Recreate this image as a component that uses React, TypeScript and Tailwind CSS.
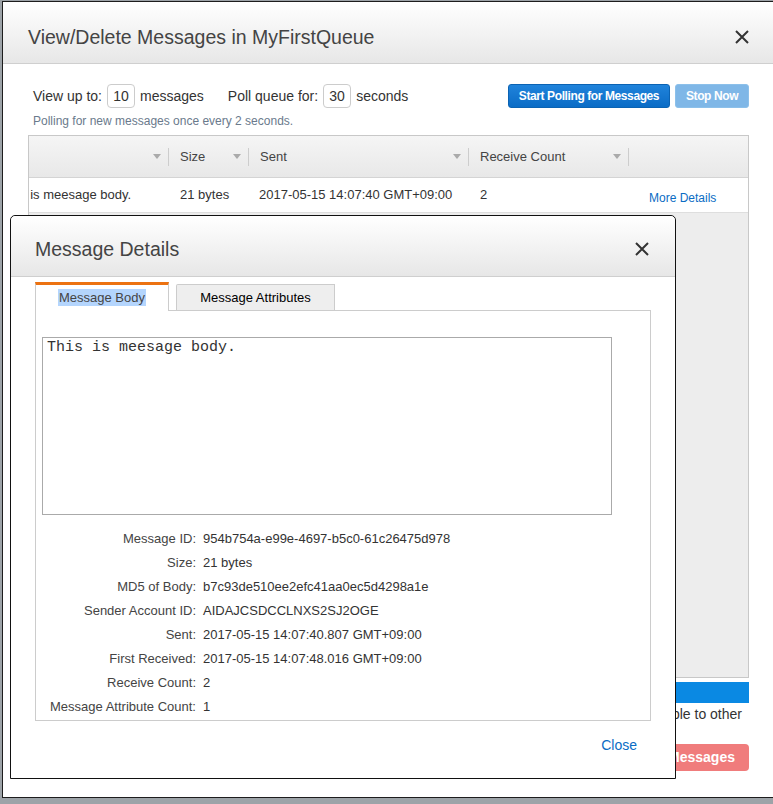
import React from 'react'

const COLS = [
  { label: '', width: 'w-[181px]' },
  { label: 'Size', width: 'w-[80px]' },
  { label: 'Sent', width: 'w-[220px]' },
  { label: 'Receive Count', width: 'w-[160px]' },
]

const DETAILS = [
  ['Message ID:', '954b754a-e99e-4697-b5c0-61c26475d978'],
  ['Size:', '21 bytes'],
  ['MD5 of Body:', 'b7c93de510ee2efc41aa0ec5d4298a1e'],
  ['Sender Account ID:', 'AIDAJCSDCCLNXS2SJ2OGE'],
  ['Sent:', '2017-05-15 14:07:40.807 GMT+09:00'],
  ['First Received:', '2017-05-15 14:07:48.016 GMT+09:00'],
  ['Receive Count:', '2'],
  ['Message Attribute Count:', '1'],
]

function XIcon() {
  return (
    <svg viewBox="0 0 14 14" className="h-[14px] w-[14px]" fill="none" stroke="#333" strokeWidth="2">
      <path d="M1 1l12 12M13 1L1 13" />
    </svg>
  )
}

function SortArrow() {
  return (
    <svg viewBox="0 0 8 5" className="h-[5px] w-[8px]">
      <path d="M0 0h8L4 5z" fill="#aaa" />
    </svg>
  )
}

export default function App() {
  return (
    <div className="relative h-[804px] w-[773px] overflow-hidden bg-[#9da3a8] font-['Liberation_Sans',Arial,sans-serif] text-[#333]">
      {/* Outer modal */}
      <div className="absolute left-[2px] top-[1px] flex h-[797px] w-[773px] flex-col border border-[#1d1d1d] bg-white">
        <div className="flex h-[62px] items-start justify-between border-b border-[#cfcfcf] bg-gradient-to-b from-white to-[#e7e7e7] pl-[25px] pr-[25px] pt-[23px]">
          <h1 className="text-[19.5px] leading-[24px] text-[#444]">View/Delete Messages in MyFirstQueue</h1>
          <div className="pt-[5px]">
            <XIcon />
          </div>
        </div>

        <div className="flex flex-col px-[25px] pt-[20px]">
          <div className="flex h-[24px] items-center justify-between">
            <div className="flex items-center pl-[5px] text-[14px]">
              <span>View up to:</span>
              <span className="mx-[5px] flex h-[24px] w-[28px] items-center justify-center rounded-[4px] border border-[#ccc]">10</span>
              <span>messages</span>
              <span className="ml-[24px]">Poll queue for:</span>
              <span className="mx-[5px] flex h-[24px] w-[28px] items-center justify-center rounded-[4px] border border-[#ccc]">30</span>
              <span>seconds</span>
            </div>
            <div className="flex gap-[5px]">
              <button className="h-[24px] w-[162px] rounded-[3px] border border-[#0b63b3] bg-gradient-to-b from-[#1f83db] to-[#0a6cc6] text-[12px] font-bold tracking-[-0.4px] text-white">
                Start Polling for Messages
              </button>
              <button className="h-[24px] w-[74px] rounded-[3px] border border-[#8cc0ea] bg-[#7fb7e7] text-[12px] font-bold tracking-[-0.4px] text-white">
                Stop Now
              </button>
            </div>
          </div>

          <p className="mt-[5px] pl-[5px] text-[12px] leading-[16px] text-[#6a7a8c]">
            Polling for new messages once every 2 seconds.
          </p>

          {/* Messages table, scrolled sideways */}
          <div className="mt-[6px] flex h-[543px] w-[721px] flex-col overflow-hidden border border-[#c8c8c8]">
            <div className="flex h-[42px] shrink-0 items-center border-b border-[#d4d4d4] bg-gradient-to-b from-[#f5f5f5] to-[#e8e8e8] text-[13px] text-[#444]">
              {COLS.map((c, i) => (
                <div
                  key={i}
                  className={`${c.width} flex shrink-0 items-center pl-[11px] ${i === 0 ? 'ml-[-41px]' : ''}`}
                >
                  <span className="flex-1">{c.label}</span>
                  <SortArrow />
                  <span className="ml-[7px] h-[18px] w-px bg-[#cdcdcd]" />
                </div>
              ))}
            </div>
            <div className="flex h-[35px] shrink-0 items-center border-b border-[#dedede] bg-white text-[13px]">
              <div className="ml-[-38px] w-[178px] shrink-0 whitespace-nowrap pl-[11px]">This is meesage body.</div>
              <div className="w-[80px] shrink-0 pl-[11px]">21 bytes</div>
              <div className="w-[220px] shrink-0 pl-[10px]">2017-05-15 14:07:40 GMT+09:00</div>
              <div className="w-[160px] shrink-0 pl-[11px]">2</div>
              <div className="pl-[20px] pt-[5px] text-[12px] text-[#0a6cc4]">More Details</div>
            </div>
            <div className="flex-1 bg-[#ededed]" />
          </div>

          <div className="mt-[4px] h-[21px] w-[721px] bg-[#0a89e3]" />
          <div className="mt-[3px] flex w-[721px] justify-end pr-[7px] text-[14px] leading-[16px]">
            Messages you view will become visible to other
          </div>
          <div className="mt-[22px] flex w-[721px] justify-end">
            <button className="h-[27px] rounded-[4px] bg-[#f07c7c] px-[14px] text-[14px] font-bold text-white">
              Delete Messages
            </button>
          </div>
        </div>
      </div>

      {/* Message Details modal */}
      <div className="absolute left-[10px] top-[215px] flex h-[564px] w-[666px] flex-col rounded-t-[5px] border border-[#111] bg-white">
        <div className="flex h-[61px] shrink-0 items-start justify-between rounded-t-[5px] border-b border-[#cfcfcf] bg-gradient-to-b from-white to-[#e7e7e7] pl-[24px] pr-[26px] pt-[21px]">
          <h2 className="text-[19.5px] leading-[24px] text-[#444]">Message Details</h2>
          <div className="pt-[5px]">
            <XIcon />
          </div>
        </div>

        <div className="flex flex-col px-[24px] pt-[5px]">
          <div className="flex items-end text-[13px]">
            <div className="relative z-10 -mb-px flex h-[29px] w-[134px] items-center justify-center border-x border-t-[3px] border-x-[#ccc] border-t-[#ec7211] bg-white pb-[1px]">
              <span className="bg-[#b4d5fd] px-px leading-[17px] text-[#444]">Message Body</span>
            </div>
            <div className="ml-[7px] flex h-[26px] w-[159px] items-center justify-center rounded-tl-[2px] border-x border-t border-[#ccc] bg-[#eee] text-black">
              Message Attributes
            </div>
          </div>

          <div className="h-[411px] w-[616px] border border-[#ccc] pl-[6px] pt-[26px]">
            <div className="h-[178px] w-[570px] border border-[#aaa] pl-[4px] pt-[1px] font-['Liberation_Mono','Courier_New',monospace] text-[15px] leading-[17px] text-[#333]">
              This is meesage body.
            </div>
            <div className="mt-[12px] grid grid-cols-[154px_1fr] gap-x-[7px] text-[13px] leading-[24px]">
              {DETAILS.map(([k, v]) => (
                <React.Fragment key={k}>
                  <div className="text-right text-[#444]">{k}</div>
                  <div className="text-[#333]">{v}</div>
                </React.Fragment>
              ))}
            </div>
          </div>

          <div className="mt-[16px] flex justify-end pr-[14px]">
            <span className="text-[14px] leading-[16px] text-[#0a6cc4]">Close</span>
          </div>
        </div>
      </div>
    </div>
  )
}
